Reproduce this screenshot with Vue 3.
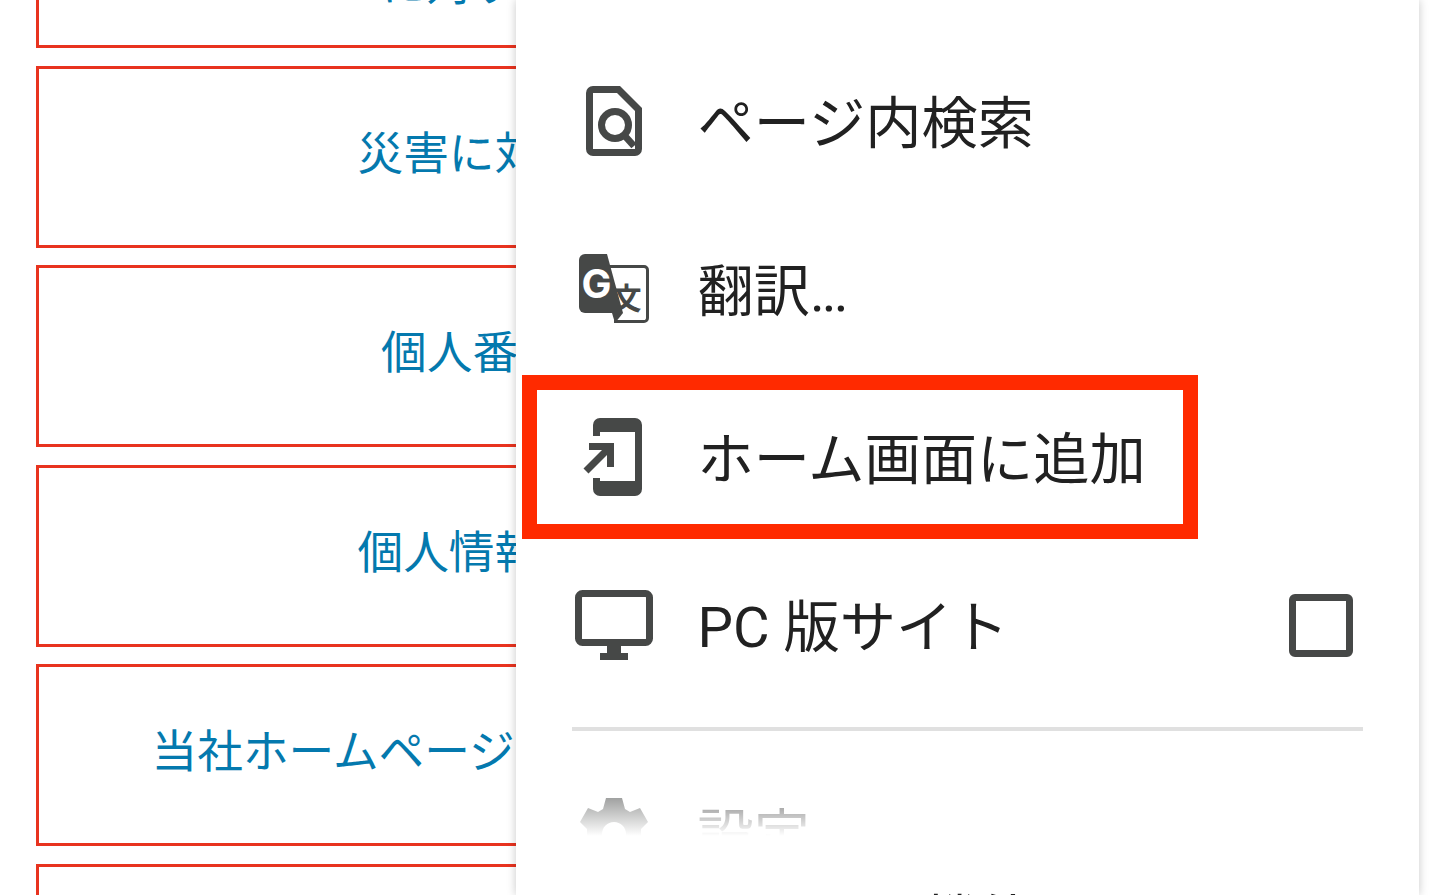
<template>
  <div class="page">
    <div class="link-list">
      <a v-for="(item, i) in links" :key="i" class="link-box">
        <span>{{ item[0] }}<template v-if="item[1]"><br>{{ item[1] }}</template></span>
      </a>
    </div>

    <div class="menu">
      <div class="menu-item">
        <svg class="menu-icon" viewBox="0 0 84 84">
          <path fill-rule="evenodd" d="M21 7H48L70 29V70a7 7 0 0 1-7 7H21a7 7 0 0 1-7-7V14a7 7 0 0 1 7-7zM21 14V70H63V32L45 14z" />
          <circle class="line" cx="43" cy="46" r="13.5" />
          <path class="line" d="M52 56L62 67" />
        </svg>
        <span class="menu-label">ページ内検索</span>
      </div>

      <div class="menu-item">
        <svg class="menu-icon" viewBox="0 0 84 84">
          <path class="line thin" d="M38 19.5H72a3.5 3.5 0 0 1 3.5 3.5V71a3.5 3.5 0 0 1-3.5 3.5H42" />
          <text class="glyph-wen" x="54.5" y="62" text-anchor="middle">文</text>
          <path d="M13 7H35L51 66H13a6 6 0 0 1-6-6V13a6 6 0 0 1 6-6z" />
          <path d="M40 66H51L43 76z" />
          <text class="glyph-g" x="24.5" y="51" text-anchor="middle">G</text>
        </svg>
        <span class="menu-label">翻訳<span class="dots">...</span></span>
      </div>

      <div class="menu-item">
        <svg class="menu-icon" viewBox="0 0 84 84">
          <path d="M28 3H63a7 7 0 0 1 7 7V74a7 7 0 0 1-7 7H28a7 7 0 0 1-7-7V63H28V66H63V17H28V21H21V10a7 7 0 0 1 7-7z" />
          <path d="M17 28H42V52H35V35H17z" />
          <path class="line" d="M37 33L14 56" />
        </svg>
        <span class="menu-label">ホーム画面に追加</span>
      </div>

      <div class="menu-item">
        <svg class="menu-icon" viewBox="0 0 84 84">
          <rect class="line" x="6.5" y="10.5" width="71" height="49" rx="4" />
          <path d="M35 63H49V70H56V77H28V70H35z" />
        </svg>
        <span class="menu-label">PC 版サイト</span>
        <span class="checkbox"></span>
      </div>

      <div class="divider"></div>

      <div class="menu-item settings">
        <svg class="menu-icon" viewBox="0 0 84 84">
          <path fill-rule="evenodd" d="M34 7H50L53 18L58 21L68 17L76 31L69 38V46L76 53L68 67L58 63L53 66L50 77H34L31 66L26 63L16 67L8 53L15 46V38L8 31L16 17L26 21L31 18zM42 31a12 12 0 1 0 0 24a12 12 0 1 0 0-24z" />
        </svg>
        <span class="menu-label">設定</span>
      </div>

      <div class="fade"></div>
      <div class="peek">機能のトレンド</div>
    </div>

    <div class="highlight"></div>
  </div>
</template>

<script setup>
const links = [
  ['お客さまの声とご意見', 'に対する当社の基本方針について'],
  ['災害に対する当社の基本的な考え方'],
  ['個人番号の取扱いについての方針'],
  ['個人情報の取扱いに関する基本方針'],
  ['当社ホームページのPcご利用にあたっての注意事項など'],
  ['サイトマップ']
]
</script>

<style>
html, body {
  background: #fff;
}
</style>

<style scoped>
.page {
  position: relative;
  width: 1440px;
  height: 895px;
  overflow: hidden;
  background: #fff;
  font-family: Roboto, "Noto Sans CJK JP", sans-serif;
}

.link-list {
  display: flex;
  flex-direction: column;
  gap: 17.5px;
  margin-top: -133.8px;
  padding: 0 36px;
}

.link-box {
  flex: none;
  display: flex;
  align-items: center;
  justify-content: center;
  box-sizing: border-box;
  height: 182px;
  padding: 0 0 14px 6px;
  border: 3px solid #e8331f;
  color: #0479ae;
  font-family: "Noto Sans CJK JP", sans-serif;
  font-size: 45.7px;
  line-height: 62px;
  text-align: center;
}

.menu {
  position: absolute;
  top: 0;
  bottom: 0;
  left: 516px;
  width: 903px;
  box-sizing: border-box;
  padding-top: 37px;
  background: #fff;
  box-shadow: 0 0 9px rgba(0, 0, 0, 0.22);
}

.menu-item {
  display: flex;
  align-items: center;
  gap: 41.5px;
  height: 168px;
  padding-left: 56px;
  padding-right: 66px;
}

.menu-icon {
  flex: none;
  width: 84px;
  height: 84px;
  fill: #464847;
}

.line {
  fill: none;
  stroke: #464847;
  stroke-width: 7;
}

.thin {
  stroke-width: 3;
}

.glyph-g {
  fill: #fff;
  font-family: Inter, sans-serif;
  font-size: 40px;
  font-weight: 700;
}

.glyph-wen {
  fill: #464847;
  font-family: "Noto Sans CJK JP", sans-serif;
  font-size: 30px;
  font-weight: 700;
}

.menu-label {
  padding-top: 5px;
  color: #212121;
  font-size: 56.25px;
  line-height: 56px;
  white-space: nowrap;
}

.dots {
  letter-spacing: -3px;
}

.checkbox {
  box-sizing: border-box;
  width: 64px;
  height: 63px;
  margin-left: auto;
  border: 7px solid #464847;
  border-radius: 6px;
}

.divider {
  height: 4px;
  margin: 18px 56px 0;
  background: #e0e0e0;
}

.settings {
  height: 116px;
  margin-top: 44px;
}

.fade {
  position: absolute;
  top: 762px;
  left: 0;
  right: 0;
  height: 123px;
  background: linear-gradient(to bottom, rgba(255, 255, 255, 0), #fff 60%);
}

.peek {
  position: relative;
  margin-top: 3px;
  padding-left: 408px;
  color: #212121;
  font-size: 56px;
  line-height: 56px;
  white-space: nowrap;
}

.highlight {
  position: absolute;
  top: 375px;
  left: 522px;
  width: 676px;
  height: 164px;
  box-sizing: border-box;
  border: 15px solid #ff2a00;
}
</style>
